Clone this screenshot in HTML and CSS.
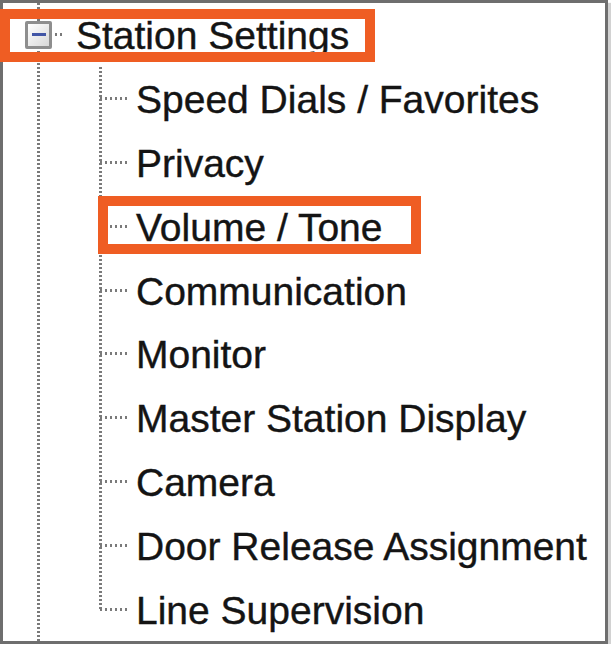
FILE: index.html
```html
<!DOCTYPE html>
<html lang="en">
<head>
  <meta charset="UTF-8" />
  <title>Station Settings</title>
  <link rel="stylesheet" href="styles.css">
</head>
<body>

  <div class="tree">
    <div class="row root-row">
      <span class="toggle"><span class="minus"></span></span>
      <span class="stub stub-short"></span>
      <span class="label">Station Settings</span>
      <span class="mark mark-root"></span>
    </div>

    <ul class="children">
      <li class="row"><span class="stub"></span><span class="label">Speed Dials / Favorites</span></li>
      <li class="row"><span class="stub"></span><span class="label">Privacy</span></li>
      <li class="row">
        <span class="stub"></span><span class="label">Volume / Tone</span>
        <span class="mark mark-volume"></span>
      </li>
      <li class="row"><span class="stub"></span><span class="label">Communication</span></li>
      <li class="row"><span class="stub"></span><span class="label">Monitor</span></li>
      <li class="row"><span class="stub"></span><span class="label">Master Station Display</span></li>
      <li class="row"><span class="stub"></span><span class="label">Camera</span></li>
      <li class="row"><span class="stub"></span><span class="label">Door Release Assignment</span></li>
      <li class="row"><span class="stub"></span><span class="label">Line Supervision</span></li>
    </ul>
  </div>

</body>
</html>
```

FILE: styles.css
```css
* {
  margin: 0;
  padding: 0;
  box-sizing: border-box;
}

body {
  background: #fff;
  font-family: 'Liberation Sans', Arial, sans-serif;
}

.tree {
  position: relative;
  width: 608px;
  height: 644px;
  border: 3px solid #6e6e6e;
  box-shadow: 3px 3px 1px #d2d2d2;
  background-color: #fff;
  background-image: repeating-linear-gradient(to bottom, #7a7a7a 0 2px, transparent 2px 4px);
  background-size: 3px 100%;
  background-position: 34px 0;
  background-repeat: no-repeat;
}

.row {
  position: relative;
  display: flex;
  align-items: center;
  height: 63.8px;
  list-style: none;
}

.label {
  padding-top: 3px;
  font-size: 39px;
  color: #141414;
  white-space: nowrap;
  -webkit-text-stroke: 0.4px #141414;
}

/* root node */
.root-row {
  padding-left: 22px;
}

.toggle {
  display: flex;
  align-items: center;
  justify-content: center;
  width: 27px;
  height: 28px;
  border: 3px solid #8e8e8e;
  border-radius: 2px;
  background: linear-gradient(135deg, #ffffff, #d8d8d8);
}

.minus {
  width: 14px;
  height: 3px;
  background: #4256a6;
}

.stub {
  display: inline-block;
  width: 28px;
  height: 3px;
  margin-right: 8px;
  background: repeating-linear-gradient(to right, #7a7a7a 0 2px, transparent 2px 5px);
}

.stub-short {
  width: 10px;
  margin-left: 3px;
  margin-right: 11px;
}

/* children */
.children {
  background-image: repeating-linear-gradient(to bottom, #7a7a7a 0 2px, transparent 2px 4px);
  background-size: 3px calc(100% - 31px);
  background-position: 96px 0;
  background-repeat: no-repeat;
}

.children .row {
  padding-left: 97px;
}

/* orange highlight boxes */
.mark {
  position: absolute;
  border: 10px solid #ef5d23;
  pointer-events: none;
}

.mark-root {
  left: -3px;
  top: 6px;
  width: 375px;
  height: 53px;
}

.mark-volume {
  left: 95px;
  top: 1.6px;
  width: 323px;
  height: 58px;
}
```
